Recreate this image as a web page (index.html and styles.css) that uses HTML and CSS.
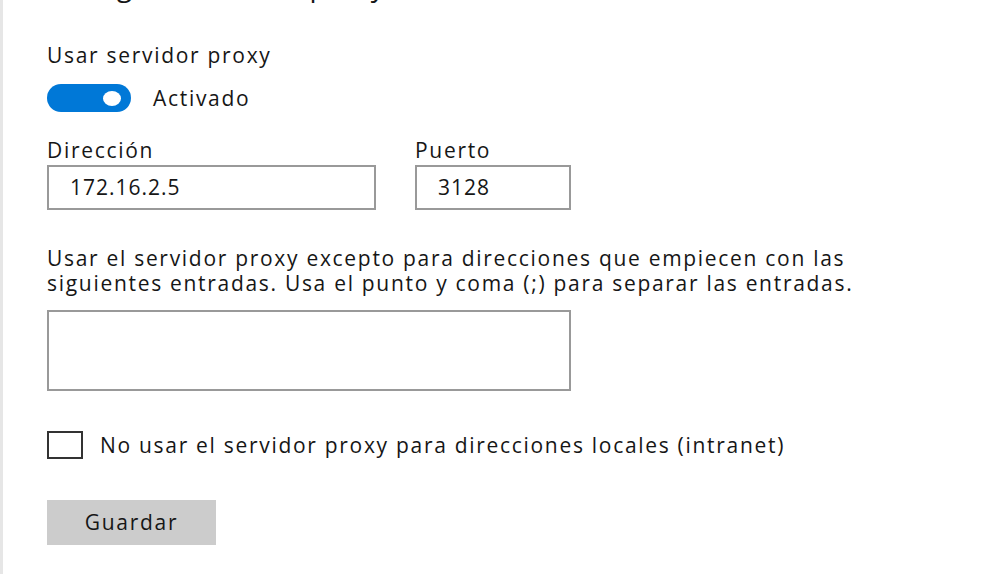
FILE: index.html
```html
<!DOCTYPE html>
<html lang="es">
<head>
<meta charset="utf-8">
<title>Proxy</title>
<link rel="stylesheet" href="styles.css">
</head>
<body>
<div class="panel">
  <h2 class="heading">Configuración de proxy manual</h2>
  <div class="label">Usar servidor proxy</div>
  <div class="toggle-row">
    <span class="toggle"><span class="knob"></span></span>
    <span class="toggle-text">Activado</span>
  </div>
  <div class="fields">
    <div class="field">
      <div class="field-label">Dirección</div>
      <div class="input wide">172.16.2.5</div>
    </div>
    <div class="field">
      <div class="field-label">Puerto</div>
      <div class="input narrow">3128</div>
    </div>
  </div>
  <p class="desc">Usar el servidor proxy excepto para direcciones que empiecen con las siguientes entradas. Usa el punto y coma (;) para separar las entradas.</p>
  <div class="textarea"></div>
  <div class="check-row">
    <span class="checkbox"></span>
    <span class="check-text">No usar el servidor proxy para direcciones locales (intranet)</span>
  </div>
  <button class="save">Guardar</button>
</div>
</body>
</html>
```
FILE: styles.css
```css
html, body {
  margin: 0;
  padding: 0;
  background: #ffffff;
}

.panel {
  box-sizing: border-box;
  min-height: 574px;
  border-left: 3px solid #e6e6e6;
  padding-left: 44px;
  font-family: "Open Sans", "Noto Sans", sans-serif;
  font-size: 21px;
  line-height: 25px;
  letter-spacing: 1.7px;
  color: #161616;
  display: flex;
  flex-direction: column;
  align-items: flex-start;
  overflow: hidden;
}

.heading {
  margin: -33px 0 0 0;
  font-size: 28px;
  line-height: 36px;
  font-weight: 400;
  letter-spacing: 0.3px;
  word-spacing: 14px;
  white-space: nowrap;
}

.label {
  margin-top: 40px;
}

.toggle-row {
  margin-top: 16px;
  display: flex;
  align-items: center;
  gap: 22px;
}

.toggle {
  width: 84px;
  height: 28px;
  border-radius: 14px;
  background: #0078d7;
  display: flex;
  align-items: center;
  justify-content: flex-end;
  padding-right: 10px;
  box-sizing: border-box;
}

.knob {
  width: 18px;
  height: 15px;
  border-radius: 50%;
  background: #ffffff;
}

.fields {
  margin-top: 26px;
  display: flex;
  gap: 39px;
}

.field-label {
  margin-bottom: 2px;
}

.input {
  box-sizing: border-box;
  height: 45px;
  border: 2px solid #999999;
  padding-left: 21px;
  display: flex;
  align-items: center;
  letter-spacing: 1px;
}

.input.wide { width: 329px; }
.input.narrow { width: 156px; }

.desc {
  margin: 36px 0 0 0;
  max-width: 840px;
}

.textarea {
  margin-top: 14px;
  box-sizing: border-box;
  width: 524px;
  height: 81px;
  border: 2px solid #999999;
}

.check-row {
  margin-top: 40px;
  display: flex;
  align-items: center;
  gap: 17px;
}

.checkbox {
  box-sizing: border-box;
  width: 36px;
  height: 28px;
  border: 2px solid #333333;
}

.save {
  margin-top: 41px;
  width: 169px;
  height: 45px;
  border: none;
  background: #cccccc;
  font: inherit;
  letter-spacing: inherit;
  color: #161616;
  padding: 0;
}
```
